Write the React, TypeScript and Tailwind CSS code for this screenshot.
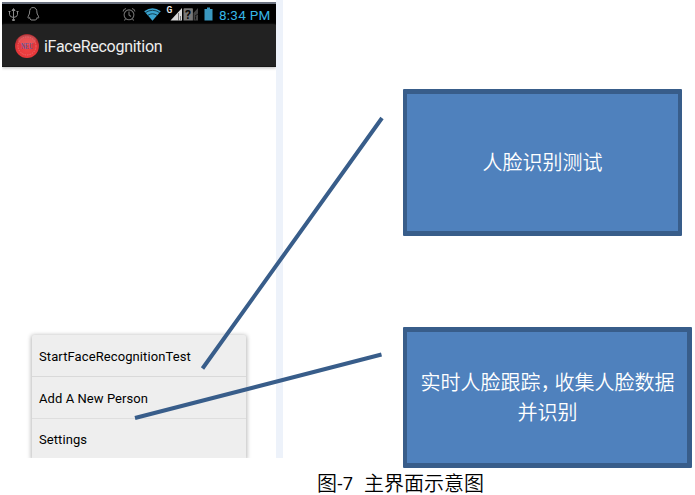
const cjk = "font-['Noto_Sans_CJK_SC',sans-serif]";
const roboto = "font-['Roboto',sans-serif]";

function StatusBar() {
  return (
    <div className="h-[23px] border-t-2 border-[#6b7280] bg-black">
      <div className="flex h-[21px] items-center">
        <svg width="213" height="21" viewBox="0 0 213 21" fill="none">
          <g stroke="#8a8a8a" strokeWidth="1">
            <path d="M11.500 5v11M7.500 7.500v3q0 2.500 4 3q4-.5 4-3v-3" />
            <path d="M10 6.500l1.500-2l1.500 2zM6.500 7.500h2M14.500 7.500h2M10.500 15.500h2v1h-2z" />
            <path d="M27.500 9c0-3.500 1-5.500 3.700-5.500s3.800 2 3.800 5.500c0 1.500 1.700 2.500 1.700 4.500c0 1-1.200.6-1.700 0c0 1-.5 2-1.300 2.500h-4.700c-.8-.5-1.300-1.500-1.300-2.500c-.5.600-1.700 1-1.700 0c0-2 1.500-3 1.500-4.500z" />
          </g>
          <g stroke="#707070" strokeWidth="1.100">
            <circle cx="127" cy="10.800" r="4.900" />
            <path d="M127 7.500v3.500l2 1.500M121 7.500q.5-2.500 3-3M133 7.500q-.5-2.500-3-3M123.500 15l-1.200 1.500M130.500 15l1.200 1.500" />
          </g>
          <path d="M142.200 7.200Q150.500 1.500 158.800 7.200L150.500 16.800Z" fill="#3aa3cf" />
          <path d="M143.300 8.700Q150.500 3.900 157.700 8.700M145.500 11.500Q150.500 8 155.500 11.500" stroke="#08232e" strokeWidth=".8" />
          <path d="M168.500 16.500L180 4V16.500Z" fill="#d8d8d8" />
          <path d="M176.500 9v7.500M178.500 12v4" stroke="#333" strokeWidth=".6" />
          <text x="164.500" y="9" fill="#e8e8e8" fontSize="8.500" fontWeight="700" className={roboto}>G</text>
          <path d="M181.500 16.500V5q0-.7.7-.7h8q.7 0 .7.700v11.500Z" fill="#777" />
          <path d="M191.500 16.500V9l4.500-5v12.500Z" fill="#444" />
          <path d="M193.500 12.500v3M193 12l3-2" stroke="#111" strokeWidth=".9" />
          <text x="183" y="15" fill="#080808" fontSize="12" fontWeight="700" className={roboto}>?</text>
          <path d="M202.500 5h2.500V3.500h3V5h2.500v11.500h-8V5z" fill="#3a97bf" />
        </svg>
        <span className={`${roboto} relative top-[0.5px] ml-1 whitespace-nowrap text-[13.5px] leading-[20px] tracking-[0.25px] text-[#35b5e5]`}>8:34 PM</span>
      </div>
    </div>
  );
}

function TitleBar() {
  return (
    <div className="flex h-[42px] items-center border-b border-[#171717] bg-[#222] pl-[13px] shadow-[0_1px_3px_#bbb]">
      <svg width="24" height="26" viewBox="0 0 24 26">
        <defs>
          <radialGradient id="ball" cx="50%" cy="62%" r="60%">
            <stop offset="0" stopColor="#f04444" />
            <stop offset="0.7" stopColor="#e43639" />
            <stop offset="1" stopColor="#a92b30" />
          </radialGradient>
        </defs>
        <circle cx="12" cy="13" r="12" fill="url(#ball)" />
        <ellipse cx="12" cy="7" rx="9" ry="5" fill="#fff" opacity=".13" />
        <circle cx="12" cy="13" r="9" fill="none" stroke="#ee7a7c" strokeWidth=".7" strokeDasharray="1.500 1" />
        <text x="6" y="16" textLength="12" lengthAdjust="spacingAndGlyphs" fontSize="8.500" fontWeight="700" fill="#6a5c9c" className="font-['Liberation_Serif',serif]">NEU</text>
      </svg>
      <span className={`${roboto} relative top-px ml-[5px] text-[16px] leading-5 tracking-[-0.27px] text-[#eee]`}>iFaceRecognition</span>
    </div>
  );
}

function Phone() {
  return (
    <section className="flex h-[456px] w-[274px] shrink-0 flex-col overflow-hidden bg-white">
      <StatusBar />
      <TitleBar />
      <ul className={`${roboto} mt-auto ml-[30px] h-[123px] w-[214px] rounded-t-[2px] bg-[#eee] text-[13px] text-black shadow-[0_1px_4px_1px_rgba(0,0,0,0.28)]`}>
        <li className="flex h-[42px] items-center border-b border-[#d9d9d9] pt-[2px] pl-[7px] tracking-[0.1px]">StartFaceRecognitionTest</li>
        <li className="flex h-[42px] items-center border-b border-[#dedede] pt-[2px] pl-[7px] tracking-[0.07px]">Add A New Person</li>
        <li className="flex h-[39px] items-center pt-[2px] pl-[7px] tracking-[0.07px]">Settings</li>
      </ul>
    </section>
  );
}

export default function App() {
  return (
    <main className="relative h-[495px] w-[695px] overflow-hidden bg-white">
      <div className="flex h-[470px] pl-[2px]">
        <div className="pt-[2px]"><Phone /></div>
        <div className="h-[458px] w-[7px] bg-[#edf2fa]" />
        <div className="ml-[120px] flex flex-col pt-[89px]">
          <div className={`${cjk} flex h-[147px] w-[279px] items-center justify-center rounded-[1px] border-x-4 border-y-[5px] border-[#385d8a] bg-[#4f81bd] pb-[2px] text-[20px] leading-[30px] font-[350] text-white`}>
            人脸识别测试
          </div>
          <div className={`${cjk} mt-[91px] flex h-[141px] w-[289px] flex-col items-center rounded-[1px] border-[5px] border-l-4 border-[#385d8a] bg-[#4f81bd] pt-[35px] pl-px text-[20px] leading-[30px] font-[350] text-white`}>
            <div className="flex whitespace-nowrap">
              <span>实时人脸跟踪</span>
              <span className="w-[14px] [font-feature-settings:'halt']">，</span>
              <span>收集人脸数据</span>
            </div>
            <div>并识别</div>
          </div>
        </div>
      </div>
      <p className={`${cjk} flex h-[25px] items-center pl-[317px] text-[20px] leading-6 font-[350] text-black`}>
        <span>图</span>
        <span className="w-[27px] font-['Open_Sans',sans-serif] text-[18px] font-normal">-7</span>
        <span>主界面示意图</span>
      </p>
      <svg className="absolute inset-0" width="695" height="495" viewBox="0 0 695 495" fill="none" stroke="#385d8a" strokeWidth="4">
        <path d="M382 118L202.500 368.500M381.500 354.500L135 418" />
      </svg>
    </main>
  );
}
